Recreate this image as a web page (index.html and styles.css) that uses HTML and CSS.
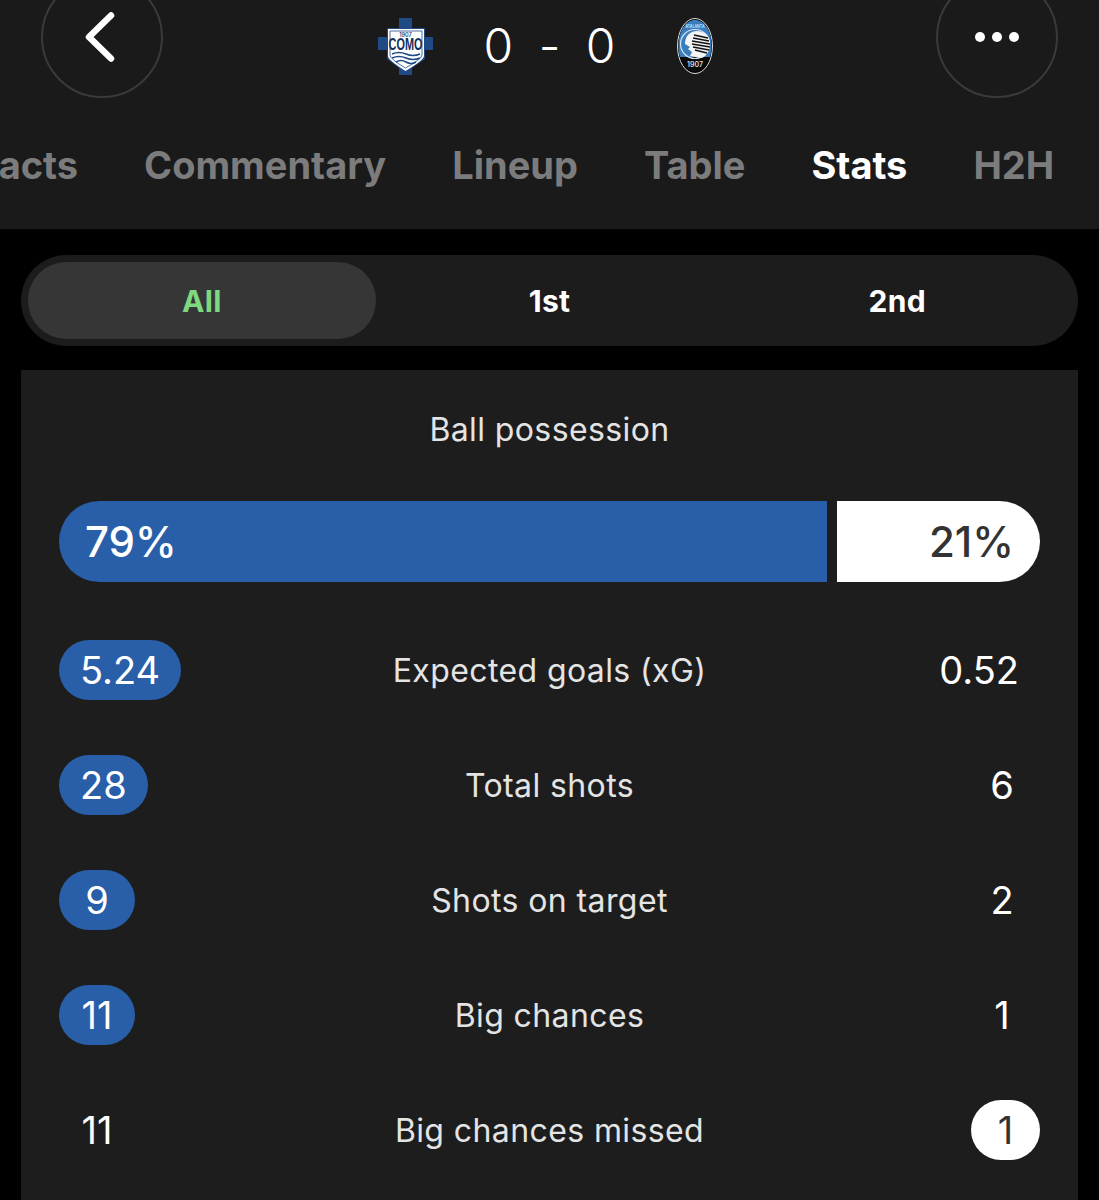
FILE: index.html
```html
<!DOCTYPE html>
<html lang="en">
<head>
<meta charset="utf-8">
<title>Como 0 - 0 Atalanta</title>
<link rel="stylesheet" href="styles.css">
</head>
<body>
<header class="header">
  <div class="top">
    <button class="round" aria-label="Back">
      <svg width="40" height="60" viewBox="0 0 40 60"><path class="chev" d="M29 8.5 L7 30 L29 51.5"/></svg>
    </button>
    <div class="match">
      <svg class="crest" width="55" height="57" viewBox="0 0 55 57">
        <path class="c-blue" d="M21 0H34V10H47V19H55V32H47V41L34 50V57H21V50L9 41V32H0V19H9V10H21Z"/>
        <path class="c-white" d="M10 11H46V38Q46 42 27.5 53Q10 42 10 38Z"/>
        <path class="c-line" d="M12 13H44V37Q44 41 27.5 50Q12 41 12 37Z"/>
        <text class="c-year" x="27.5" y="19" text-anchor="middle">1907</text>
        <text class="c-name" transform="translate(27.5 32) scale(.68 1)" text-anchor="middle">COMO</text>
        <path class="c-wave" d="M14 36Q21 33 28 36T42 36M14 40Q21 37 28 40T42 40M18 44Q23 41 28 44T38 44"/>
      </svg>
      <div class="score"><span>0</span><span class="dash">-</span><span>0</span></div>
      <svg class="crest" width="36" height="56" viewBox="0 0 36 56">
        <ellipse class="a-edge" cx="18" cy="28" rx="17.5" ry="27.5"/>
        <path class="a-blue" d="M1.5 28C1.5 12 9 2 18 2S34.5 12 34.5 28C34.5 32 34 35 33 39H3C2 35 1.5 32 1.5 28Z"/>
        <path class="a-dark" d="M3 39H33C30 49 24 54 18 54S6 49 3 39Z"/>
        <text class="a-name" transform="translate(18 10) scale(.8 1)" text-anchor="middle">ATALANTA</text>
        <circle class="a-ring" cx="18" cy="26" r="14.5"/>
        <path class="a-white" d="M8 26C8 18 13 13 20 13C27 13 33 18 33 26C33 33 29 39 24 40L13 38L15 34L11 31L13 29Z"/>
        <path class="a-stripes" d="M17 17L31 20M16 20L32 23M15 23L33 26M15 26L33 29M16 29L32 32M18 32L30 35"/>
        <text class="a-year" x="18" y="49" text-anchor="middle">1907</text>
      </svg>
    </div>
    <button class="round" aria-label="More">
      <svg width="44" height="12" viewBox="0 0 44 12"><circle class="dot" cx="5" cy="6" r="5"/><circle class="dot" cx="22" cy="6" r="5"/><circle class="dot" cx="39" cy="6" r="5"/></svg>
    </button>
  </div>
  <nav class="tabs">
    <span class="tab">Impacts</span>
    <span class="tab">Commentary</span>
    <span class="tab">Lineup</span>
    <span class="tab">Table</span>
    <span class="tab tab-on">Stats</span>
    <span class="tab">H2H</span>
  </nav>
</header>
<main class="main">
  <div class="segments">
    <div class="seg seg-on">All</div>
    <div class="seg">1st</div>
    <div class="seg">2nd</div>
  </div>
  <section class="card">
    <h2 class="label title">Ball possession</h2>
    <div class="bar">
      <div class="bar-home">79%</div>
      <div class="bar-away">21%</div>
    </div>
    <div class="rows">
      <div class="row"><div class="side"><span class="pill blue">5.24</span></div><div class="label">Expected goals (xG)</div><div class="side end"><span class="pill">0.52</span></div></div>
      <div class="row"><div class="side"><span class="pill blue">28</span></div><div class="label">Total shots</div><div class="side end"><span class="pill wide">6</span></div></div>
      <div class="row"><div class="side"><span class="pill blue wide">9</span></div><div class="label">Shots on target</div><div class="side end"><span class="pill wide">2</span></div></div>
      <div class="row"><div class="side"><span class="pill blue wide">11</span></div><div class="label">Big chances</div><div class="side end"><span class="pill wide">1</span></div></div>
      <div class="row"><div class="side"><span class="pill wide">11</span></div><div class="label">Big chances missed</div><div class="side end"><span class="pill white">1</span></div></div>
    </div>
  </section>
</main>
</body>
</html>
```
FILE: styles.css
```css
* { box-sizing: border-box; }
html, body { margin: 0; background: #000; }
body { width: 1099px; height: 1200px; overflow: hidden; font-family: Inter, "Liberation Sans", sans-serif; color: #fff; }

.header { height: 229px; background: #1a1a1b; overflow: hidden; }
.top { display: flex; justify-content: space-between; align-items: center; height: 122px; margin-top: -24px; padding: 0 41px; }
.round { width: 122px; height: 122px; flex: none; border-radius: 50%; background: transparent; border: 2px solid #3a3a3b; padding: 0; display: flex; align-items: center; justify-content: center; }
.chev { fill: none; stroke: #fff; stroke-width: 6.5; stroke-linecap: round; stroke-linejoin: round; }
.dot { fill: #fff; }
.match { display: flex; align-items: center; margin: 18px 9px 0 0; }
.crest { display: block; flex: none; }
.score { display: flex; justify-content: space-between; width: 132px; margin: 0 61px 0 51px; font-size: 48px; font-weight: 300; line-height: 58px; }
.c-blue { fill: #1f4a85; }
.c-white { fill: #fff; }
.c-line { fill: none; stroke: #1f4a85; stroke-width: 0.8; }
.c-year { font-size: 5.5px; font-weight: 600; fill: #1f3f70; }
.c-name { font-size: 16px; font-weight: 700; fill: #12305e; font-family: "Liberation Sans", sans-serif; }
.c-wave { fill: none; stroke: #1f4a85; stroke-width: 1.5; }
.a-edge { fill: #000; stroke: #ddd; stroke-width: 1; }
.a-blue { fill: #3a7dbd; }
.a-dark { fill: #0a0a0a; }
.a-name { font-size: 4.5px; font-weight: 600; fill: #cfe2f3; }
.a-ring { fill: none; stroke: #d5e6f5; stroke-width: 1.2; }
.a-white { fill: #f4f4f4; }
.a-stripes { fill: none; stroke: #111; stroke-width: 1.5; }
.a-year { font-size: 7px; font-weight: 600; fill: #ddd; }

.tabs { display: flex; gap: 66px; margin: 45px 0 0 -71px; white-space: nowrap; font-size: 38px; font-weight: 700; line-height: 44px; color: #7c7c7d; }
.tab { flex: none; }
.tab-on { color: #fff; }

.main { padding: 26px 21px 0; }
.segments { display: flex; height: 91px; padding: 7px; border-radius: 46px; background: #1c1c1d; }
.seg { flex: 1; display: flex; align-items: center; justify-content: center; border-radius: 38px; font-size: 30px; font-weight: 700; letter-spacing: 0.3px; }
.seg-on { background: #363637; color: #7ed87f; }

.card { height: 830px; margin-top: 24px; padding: 37px 38px 0; background: #1d1d1e; }
.label { margin: 0; padding-top: 2px; font-size: 32px; font-weight: 400; color: #e4e4e4; letter-spacing: 0.4px; text-align: center; line-height: 46px; }
.title { height: 46px; padding-top: 0; margin-bottom: 48px; }
.bar { display: flex; gap: 10px; height: 81px; font-size: 42px; font-weight: 500; line-height: 81px; }
.bar-home { width: 768px; flex: none; padding-left: 26px; background: #295ea8; border-radius: 41px 0 0 41px; }
.bar-away { flex: 1; padding-right: 26px; text-align: right; background: #fff; color: #333; border-radius: 0 41px 41px 0; }
.rows { display: flex; flex-direction: column; gap: 55px; margin-top: 58px; }
.row { display: grid; grid-template-columns: 1fr 2fr 1fr; height: 60px; align-items: center; }
.side { display: flex; }
.end { justify-content: flex-end; }
.pill { display: inline-flex; align-items: center; justify-content: center; height: 60px; padding: 0 21px; border-radius: 30px; font-size: 38px; font-weight: 400; }
.wide { min-width: 76px; }
.blue { background: #295ea8; }
.white { min-width: 69px; background: #fff; color: #333; }
```
